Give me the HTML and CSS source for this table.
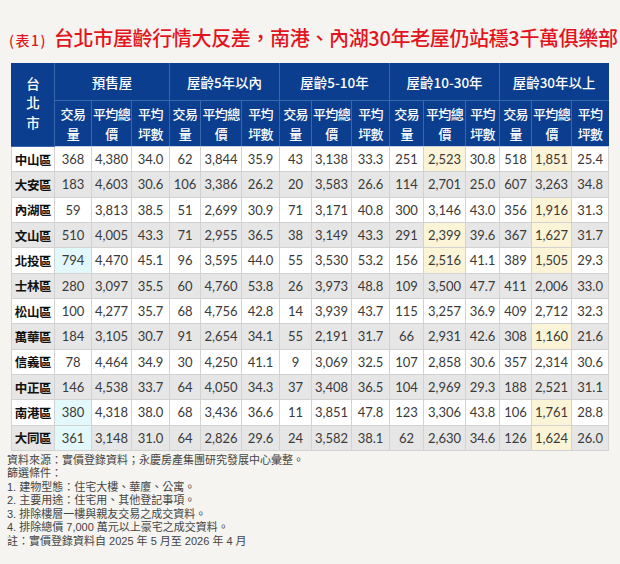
FILE: index.html
```html
<!DOCTYPE html>
<html lang="zh-Hant">
<head>
<meta charset="utf-8">
<title>台北市屋齡行情</title>
<link rel="stylesheet" href="styles.css">
</head>
<body>
<div class="page">
  <h1 class="title"><span class="tag">(表1)</span><span class="headline">台北市屋齡行情大反差，南港、內湖30年老屋仍站穩3千萬俱樂部</span></h1>
  <table class="grid">
    <colgroup>
      <col class="c-d"><col class="c-a"><col class="c-b"><col class="c-c">
      <col class="c-a2"><col class="c-b2"><col class="c-c">
      <col class="c-a3"><col class="c-b"><col class="c-c">
      <col class="c-a4"><col class="c-b4"><col class="c-c4">
      <col class="c-a3"><col class="c-b"><col class="c-c5">
    </colgroup>
    <thead>
      <tr class="h1">
        <th rowspan="2" class="city">台<br>北<br>市</th>
        <th colspan="3">預售屋</th>
        <th colspan="3">屋齡5年以內</th>
        <th colspan="3">屋齡5-10年</th>
        <th colspan="3">屋齡10-30年</th>
        <th colspan="3">屋齡30年以上</th>
      </tr>
      <tr class="h2">
        <th>交易<br>量</th><th>平均總<br>價</th><th>平均<br>坪數</th>
        <th>交易<br>量</th><th>平均總<br>價</th><th>平均<br>坪數</th>
        <th>交易<br>量</th><th>平均總<br>價</th><th>平均<br>坪數</th>
        <th>交易<br>量</th><th>平均總<br>價</th><th>平均<br>坪數</th>
        <th>交易<br>量</th><th>平均總<br>價</th><th>平均<br>坪數</th>
      </tr>
    </thead>
    <tbody>
      <tr><th>中山區</th><td>368</td><td>4,380</td><td>34.0</td><td>62</td><td>3,844</td><td>35.9</td><td>43</td><td>3,138</td><td>33.3</td><td>251</td><td class="hy">2,523</td><td>30.8</td><td>518</td><td class="hy">1,851</td><td>25.4</td></tr>
      <tr><th>大安區</th><td>183</td><td>4,603</td><td>30.6</td><td>106</td><td>3,386</td><td>26.2</td><td>20</td><td>3,583</td><td>26.6</td><td>114</td><td>2,701</td><td>25.0</td><td>607</td><td>3,263</td><td>34.8</td></tr>
      <tr><th>內湖區</th><td>59</td><td>3,813</td><td>38.5</td><td>51</td><td>2,699</td><td>30.9</td><td>71</td><td>3,171</td><td>40.8</td><td>300</td><td>3,146</td><td>43.0</td><td>356</td><td class="hy">1,916</td><td>31.3</td></tr>
      <tr><th>文山區</th><td>510</td><td>4,005</td><td>43.3</td><td>71</td><td>2,955</td><td>36.5</td><td>38</td><td>3,149</td><td>43.3</td><td>291</td><td class="hy">2,399</td><td>39.6</td><td>367</td><td class="hy">1,627</td><td>31.7</td></tr>
      <tr><th>北投區</th><td class="hc">794</td><td>4,470</td><td>45.1</td><td>96</td><td>3,595</td><td>44.0</td><td>55</td><td>3,530</td><td>53.2</td><td>156</td><td class="hy">2,516</td><td>41.1</td><td>389</td><td class="hy">1,505</td><td>29.3</td></tr>
      <tr><th>士林區</th><td>280</td><td>3,097</td><td>35.5</td><td>60</td><td>4,760</td><td>53.8</td><td>26</td><td>3,973</td><td>48.8</td><td>109</td><td>3,500</td><td>47.7</td><td>411</td><td>2,006</td><td>33.0</td></tr>
      <tr><th>松山區</th><td>100</td><td>4,277</td><td>35.7</td><td>68</td><td>4,756</td><td>42.8</td><td>14</td><td>3,939</td><td>43.7</td><td>115</td><td>3,257</td><td>36.9</td><td>409</td><td>2,712</td><td>32.3</td></tr>
      <tr><th>萬華區</th><td>184</td><td>3,105</td><td>30.7</td><td>91</td><td>2,654</td><td>34.1</td><td>55</td><td>2,191</td><td>31.7</td><td>66</td><td>2,931</td><td>42.6</td><td>308</td><td class="hy">1,160</td><td>21.6</td></tr>
      <tr><th>信義區</th><td>78</td><td>4,464</td><td>34.9</td><td>30</td><td>4,250</td><td>41.1</td><td>9</td><td>3,069</td><td>32.5</td><td>107</td><td>2,858</td><td>30.6</td><td>357</td><td>2,314</td><td>30.6</td></tr>
      <tr><th>中正區</th><td>146</td><td>4,538</td><td>33.7</td><td>64</td><td>4,050</td><td>34.3</td><td>37</td><td>3,408</td><td>36.5</td><td>104</td><td>2,969</td><td>29.3</td><td>188</td><td>2,521</td><td>31.1</td></tr>
      <tr><th>南港區</th><td class="hc">380</td><td>4,318</td><td>38.0</td><td>68</td><td>3,436</td><td>36.6</td><td>11</td><td>3,851</td><td>47.8</td><td>123</td><td>3,306</td><td>43.8</td><td>106</td><td class="hy">1,761</td><td>28.8</td></tr>
      <tr><th>大同區</th><td class="hc">361</td><td>3,148</td><td>31.0</td><td>64</td><td>2,826</td><td>29.6</td><td>24</td><td>3,582</td><td>38.1</td><td>62</td><td>2,630</td><td>34.6</td><td>126</td><td class="hy">1,624</td><td>26.0</td></tr>
    </tbody>
  </table>
  <div class="notes">
    <p>資料來源：實價登錄資料；永慶房產集團研究發展中心彙整。</p>
    <p>篩選條件：</p>
    <p>1. 建物型態：住宅大樓、華廈、公寓。</p>
    <p>2. 主要用途：住宅用、其他登記事項。</p>
    <p>3. 排除樓層一樓與親友交易之成交資料。</p>
    <p>4. 排除總價 7,000 萬元以上豪宅之成交資料。</p>
    <p>註：實價登錄資料自 2025 年 5 月至 2026 年 4 月</p>
  </div>
</div>
</body>
</html>
```

FILE: styles.css
```css
html, body {
  margin: 0;
  padding: 0;
  background: #f5f4f0;
}
body {
  font-family: "Noto Sans CJK TC", "Noto Sans", sans-serif;
  color: #333;
}
.page {
  padding: 26px 0 0 0;
  width: 620px;
}
.title {
  margin: 0 0 0 9px;
  height: 37px;
  display: flex;
  align-items: baseline;
  color: #e3141d;
  font-weight: 500;
  white-space: nowrap;
}
.tag {
  font-size: 14px;
  margin-right: 7px;
  letter-spacing: 1.5px;
}
.headline {
  font-size: 20px;
  line-height: 24px;
  letter-spacing: -0.35px;
}
.grid {
  margin-left: 11px;
  border-collapse: collapse;
  table-layout: fixed;
  width: 597px;
}
.c-d { width: 43px; }
.c-a { width: 37px; }
.c-b { width: 40px; }
.c-c { width: 38px; }
.c-a2 { width: 31px; }
.c-b2 { width: 41px; }
.c-a3 { width: 32px; }
.c-a4 { width: 34px; }
.c-b4 { width: 42px; }
.c-c4 { width: 34px; }
.c-c5 { width: 37px; }

thead th {
  background: #0b3e8f;
  color: #fff;
  font-weight: 500;
  border: 1px solid #3a66ad;
  padding: 0;
  text-align: center;
  white-space: nowrap;
  overflow: visible;
}
thead tr.h1 th {
  height: 36px;
  font-size: 13.5px;
  border-top-color: #0b3e8f;
}
thead tr.h2 th {
  height: 45px;
  font-size: 13px;
  line-height: 20px;
  letter-spacing: -0.6px;
  border-bottom-color: #c6cfe0;
}
thead th.city {
  font-size: 14px;
  line-height: 19.5px;
  padding-bottom: 4px;
  border-left-color: #0b3e8f;
}
thead tr.h1 th:last-child,
thead tr.h2 th:last-child {
  border-right-color: #0b3e8f;
}

tbody tr {
  height: 25.33px;
  background: #fff;
}
tbody tr:nth-child(even) {
  background: #e6e6e6;
}
tbody th, tbody td {
  border: 1px solid #d2d2d2;
  padding: 0;
  text-align: center;
  white-space: nowrap;
}
tbody th {
  font-size: 12.5px;
  font-weight: 700;
  color: #111;
  letter-spacing: -0.3px;
}
tbody td {
  font-family: "Lato", "Liberation Sans", sans-serif;
  font-size: 13px;
  color: #3a3a3a;
}
tbody td.hy { background: #fcf4d6; }
tbody td.hc { background: #e2f8fa; }

.notes {
  padding: 3px 0 0 7px;
  font-family: "Liberation Sans", "Noto Sans CJK TC", sans-serif;
  font-size: 11px;
  line-height: 13.5px;
  color: #444;
}
.notes p {
  margin: 0;
}
```
